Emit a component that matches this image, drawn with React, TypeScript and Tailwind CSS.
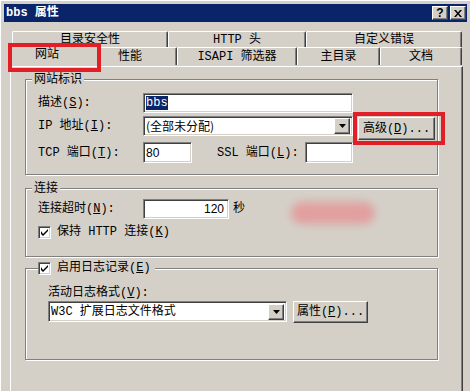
import React from "react";

const sunken =
  "bg-white border border-t-[#808080] border-l-[#808080] border-b-white border-r-white shadow-[inset_1px_1px_0_#404040,inset_-1px_-1px_0_#d4d0c8]";
const raised =
  "bg-[#d4d0c8] border border-t-white border-l-white border-b-[#404040] border-r-[#404040] shadow-[inset_-1px_-1px_0_#808080]";
const etched = "border border-[#808080] shadow-[1px_1px_0_#fff,inset_1px_1px_0_#fff]";

function U({ c }: { c: string }) {
  return <span className="underline underline-offset-1">{c}</span>;
}

function Arrow() {
  return (
    <svg width="7" height="4" viewBox="0 0 7 4">
      <path d="M0 0h7L3.5 4z" fill="#000" />
    </svg>
  );
}

function DropBtn() {
  return (
    <div className={`${raised} w-[16px] h-[16px] flex items-center justify-center`}>
      <Arrow />
    </div>
  );
}

function Check() {
  return (
    <div className={`${sunken} w-[13px] h-[13px] flex items-center justify-center shrink-0`}>
      <svg width="7" height="7" viewBox="0 0 7 7">
        <path d="M0 2v3l2 2 5-5V0L2 5z" fill="#000" />
      </svg>
    </div>
  );
}

function BackTab({ w, label }: { w: number; label: string }) {
  return (
    <div
      style={{ width: w }}
      className="h-[16px] border-t border-l border-white border-r border-r-[#404040] shadow-[inset_-1px_0_0_#808080] rounded-tl-[2px] rounded-tr-[2px] flex items-start pt-[1px] justify-center"
    >
      {label}
    </div>
  );
}

function FrontTab({ w, label, pl }: { w: number; label: string; pl?: number }) {
  return (
    <div
      style={{ width: w, paddingLeft: pl }}
      className={`h-[18px] border-t border-l border-white border-r border-r-[#404040] shadow-[inset_-1px_0_0_#808080] rounded-tl-[2px] rounded-tr-[2px] flex items-center ${pl ? "justify-start" : "justify-center"}`}
    >
      {label}
    </div>
  );
}

export default function App() {
  return (
    <div className="relative w-[470px] h-[391px] overflow-hidden bg-[#d4d0c8] text-[12px] leading-[14px] text-black [font-family:'Liberation_Mono','Noto_Sans_CJK_SC',monospace] pt-[4px] pl-[4px] shadow-[inset_1px_1px_0_#fff]">
      {/* title bar */}
      <div className="w-[463px] h-[18px] bg-[#0a246a] flex items-center pl-[2px] pr-[1px]">
        <span className="text-white font-bold">bbs 属性</span>
        <div className="ml-auto flex gap-[2px]">
          <div className={`${raised} w-[16px] h-[14px] flex items-center justify-center font-bold text-[12px] leading-none [font-family:'Liberation_Sans',sans-serif]`}>
            ?
          </div>
          <div className={`${raised} w-[16px] h-[14px] flex items-center justify-center`}>
            <svg width="8" height="7" viewBox="0 0 8 7">
              <path d="M0 0h2l2 2.5L6 0h2L5 3.5 8 7H6L4 4.5 2 7H0l3-3.5z" fill="#000" />
            </svg>
          </div>
        </div>
      </div>

      {/* tabs */}
      <div className="mt-[9px] ml-[6px] w-[453px]">
        <div className="flex ml-[2px]">
          <BackTab w={156} label="目录安全性" />
          <BackTab w={138} label="HTTP 头" />
          <BackTab w={156} label="自定义错误" />
        </div>
        <div className="flex">
          <div className="relative z-10 w-[91px] h-[21px] -mt-[2px] -ml-[2px] -mr-[2px] bg-[#d4d0c8] border-t border-l border-white border-r border-r-[#404040] shadow-[inset_-1px_0_0_#808080] rounded-tl-[2px] rounded-tr-[2px] flex items-center pl-[26px] pb-[2px]">
            网站
          </div>
          <FrontTab w={80} label="性能" pl={20} />
          <FrontTab w={120} label="ISAPI 筛选器" />
          <FrontTab w={83} label="主目录" />
          <FrontTab w={82} label="文档" />
        </div>

        {/* panel */}
        <div className="w-[453px] h-[340px] border-t border-l border-white border-r border-r-[#404040] shadow-[inset_-1px_0_0_#808080] pl-[14px]">
          {/* group 1 */}
          <div className={`relative mt-[12px] w-[413px] h-[96px] ${etched} pl-[12px] pt-[13px]`}>
            <div className="absolute -top-[7px] left-[6px] px-[2px] bg-[#d4d0c8]">网站标识</div>
            <div className="flex items-center h-[20px]">
              <div className="w-[105px]">
                描述(<U c="S" />):
              </div>
              <div className={`${sunken} w-[210px] h-[20px] flex items-center pl-[2px]`}>
                <span className="bg-[#0a246a] text-white">bbs</span>
              </div>
            </div>
            <div className="flex items-start h-[24px] mt-[3px]">
              <div className="w-[105px] h-[20px] flex items-center">
                IP 地址(<U c="I" />):
              </div>
              <div className={`${sunken} w-[210px] h-[20px] flex items-center pl-[2px] pr-[2px] [font-family:'Noto_Sans_CJK_SC',sans-serif]`}>
                <span>(全部未分配)</span>
                <div className="ml-auto">
                  <DropBtn />
                </div>
              </div>
              <div className={`${raised} ml-[5px] mt-[1px] w-[77px] h-[23px] flex items-center justify-center`}>
                高级(<U c="D" />)...
              </div>
            </div>
            <div className="flex items-center h-[21px] mt-[2px]">
              <div className="w-[105px]">
                TCP 端口(<U c="T" />):
              </div>
              <div className={`${sunken} w-[49px] h-[21px] flex items-center pl-[2px] [font-family:'Liberation_Sans',sans-serif]`}>
                80
              </div>
              <div className="ml-[25px] w-[88px]">
                SSL 端口(<U c="L" />):
              </div>
              <div className={`${sunken} w-[48px] h-[21px]`} />
            </div>
          </div>

          {/* group 2 */}
          <div className={`relative mt-[13px] w-[413px] h-[69px] ${etched} pl-[12px] pt-[10px]`}>
            <div className="absolute -top-[7px] left-[6px] px-[2px] bg-[#d4d0c8]">连接</div>
            <div className="flex items-center h-[20px]">
              <div className="w-[105px]">
                连接超时(<U c="N" />):
              </div>
              <div className={`${sunken} w-[86px] h-[20px] flex items-center justify-end pr-[4px] [font-family:'Liberation_Sans',sans-serif]`}>
                120
              </div>
              <div className="ml-[4px]">秒</div>
              <div className="ml-[46px] mt-[8px] w-[84px] h-[22px] rounded-full bg-[#e39a9a] blur-[4px] opacity-90" />
            </div>
            <div className="flex items-center mt-[6px]">
              <Check />
              <div className="ml-[6px]">
                保持 HTTP 连接(<U c="K" />)
              </div>
            </div>
          </div>

          {/* group 3 */}
          <div className={`relative mt-[11px] w-[413px] h-[92px] ${etched} pl-[22px] pt-[17px]`}>
            <div className="absolute -top-[8px] left-[12px] pr-[4px] bg-[#d4d0c8] flex items-center">
              <Check />
              <div className="ml-[6px]">
                启用日志记录(<U c="E" />)
              </div>
            </div>
            <div>
              活动日志格式(<U c="V" />):
            </div>
            <div className="flex items-start mt-[1px]">
              <div className={`${sunken} w-[239px] h-[21px] flex items-center pl-[2px] pr-[2px]`}>
                <span>W3C 扩展日志文件格式</span>
                <div className="ml-auto">
                  <DropBtn />
                </div>
              </div>
              <div className={`${raised} ml-[6px] w-[75px] h-[22px] flex items-center justify-center`}>
                属性(<U c="P" />)...
              </div>
            </div>
          </div>
        </div>
      </div>

      {/* red annotation boxes */}
      <div className="absolute left-[8px] top-[43px] w-[93px] h-[29px] border-[4px] border-[#e21f26] z-20 pointer-events-none" />
      <div className="absolute left-[353px] top-[112px] w-[92px] h-[33px] border-[4px] border-[#e21f26] z-20 pointer-events-none" />
    </div>
  );
}
